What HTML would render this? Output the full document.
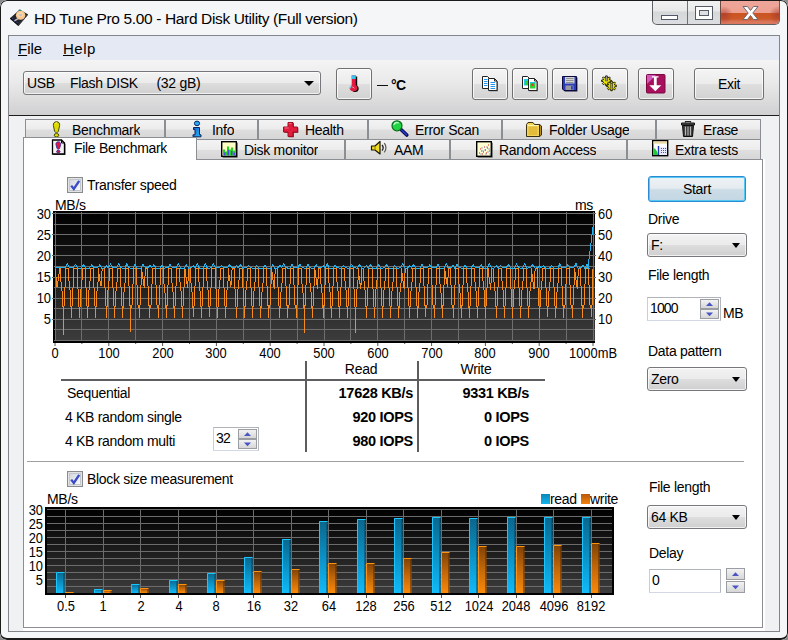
<!DOCTYPE html>
<html><head><meta charset="utf-8"><title>HD Tune Pro</title>
<style>
*{box-sizing:border-box;margin:0;padding:0}
html,body{width:788px;height:640px;overflow:hidden;background:#8a8a8a}
body{font-family:"Liberation Sans",sans-serif;font-size:14px;letter-spacing:-.3px;color:#000;position:relative}
.abs,.win div,.win span,.win svg{position:absolute}
.win{position:absolute;left:0;top:0;width:788px;height:640px;background:#f5f6f8;border-radius:7px;overflow:hidden}
.frame{left:0;top:0;width:788px;height:640px;border:1px solid #1b1b1b;border-right-width:1px;border-bottom-width:2px;border-radius:7px;pointer-events:none}
.win *{white-space:pre}
.title{left:34px;top:9px;font-size:15.500px;letter-spacing:-.36px;line-height:20px;color:#000}
.client{left:8px;top:35px;width:772px;height:597px;border:1px solid #83858a;background:#f0f1f3}
.menubar{left:9px;top:36px;width:770px;height:24px;background:#e5e9f3}
.menu{top:39px;font-size:15px;line-height:20px;letter-spacing:0}
.toolbar{left:9px;top:60px;width:770px;height:55px;background:linear-gradient(#f4f4f5 0,#e9e9ea 42%,#dbdbdc 75%,#d0d0d2 100%)}
.tbline{left:9px;top:115px;width:770px;height:1px;background:#1d1d1d}
.btn{border:1px solid #707070;border-radius:3px;background:linear-gradient(#f4f4f4 0,#ececec 48%,#dedede 52%,#d2d2d2 100%);box-shadow:inset 0 0 0 1px rgba(255,255,255,.75)}
.combo{border:1px solid #76787b;border-radius:3px;background:linear-gradient(#f3f3f3 0,#ebebeb 48%,#dddddd 52%,#cfcfcf 100%);box-shadow:inset 0 0 0 1px rgba(255,255,255,.7);line-height:22px;padding-left:5px}
.arr{width:0;height:0;border-left:5px solid transparent;border-right:5px solid transparent;border-top:5px solid #000}
.arr.sm{border-left-width:4.500px;border-right-width:4.500px;border-top-width:5px}
.tab{border:1px solid #8b8e93;border-bottom:none;background:linear-gradient(#f3f3f3 0,#ececec 48%,#dedede 52%,#d6d6d6 100%);height:19px;line-height:19px}
.tab span{top:1px}
.lbl{line-height:16px}
.tt{height:16px;overflow:hidden}
.xl{letter-spacing:0;top:345px;width:60px;text-align:center;line-height:16px;font-size:14px;transform:scaleX(.92);transform-origin:50% 50%}
.yl{letter-spacing:0;left:21px;width:30px;text-align:right;line-height:16px;font-size:14px;transform:scaleX(.92);transform-origin:100% 50%}
.yr{letter-spacing:0;left:598px;width:30px;text-align:left;line-height:16px;font-size:14px;transform:scaleX(.92);transform-origin:0 50%}
.yl2{letter-spacing:0;left:13px;width:30px;text-align:right;line-height:16px;font-size:14px;transform:scaleX(.92);transform-origin:100% 50%}
.xl2{letter-spacing:0;top:598px;width:60px;text-align:center;line-height:16px;font-size:14px;transform:scaleX(.92);transform-origin:50% 50%}
.b{font-weight:bold}
.bv{font-weight:bold;font-size:14.500px;letter-spacing:-.3px}
.chk{width:14px;height:14px;border:1px solid #8e8f8f;background:linear-gradient(135deg,#dcdfe4,#f7f8fa);box-shadow:inset 0 0 0 1px #f4f4f4,inset 0 0 0 2px #b6bac1}
.spinbox{border:1px solid;border-color:#b0b3ba #b3b6bc #d3d9e4 #c6cddb;background:#fff}
.spin{background:linear-gradient(#f2f2f2,#d6d6d6);border:1px solid #9a9da2}
</style></head><body>
<div class="win">
<!-- title bar -->
<svg style="left:8px;top:8px" width="22" height="20" viewBox="0 0 22 20"><path d="M1.800 10.400 11.700 1.500 20.200 6.600 10.400 18z" fill="#23232b"/><path d="M1.800 10.400 10.400 18 10.400 16.600 3 9.600z" fill="#101014"/><path d="M10.400 18 20.200 6.600 19 6.400 10.400 16.600z" fill="#3a3a46"/><ellipse cx="12.600" cy="7.300" rx="4.700" ry="4.500" fill="#f7c690"/><ellipse cx="12.300" cy="6.500" rx="3" ry="2.600" fill="#fbd7a6"/><rect x="11.400" y="6" width="2.400" height="2.200" fill="#b9bfd0"/><path d="M10.800 2.300h2.200" stroke="#2a8a78" stroke-width="1.300"/><path d="M6.300 12.800 10.200 10.600" stroke="#bdbdbd" stroke-width="1.500"/><path d="M4.200 10.600h1M8.500 14.600h1M5.500 13h1" stroke="#3a4cc0" stroke-width="1"/></svg>
<div class="title">HD Tune Pro 5.00 - Hard Disk Utility (Full version)</div>
<!-- caption buttons -->
<div style="left:652px;top:0;width:128px;height:25px;border:1px solid #5f6163;border-top:none;border-radius:0 0 5px 5px;overflow:hidden;background:linear-gradient(#f2f2f3 0,#e9e9ea 45%,#d6d7d9 50%,#dcdde0 100%)">
 <div style="left:34px;top:0;width:1px;height:25px;background:#6f7275"></div>
 <div style="left:67px;top:0;width:60px;height:25px;border-left:1px solid #6b4a42;background:radial-gradient(ellipse 9px 9px at 3px 15px,rgba(170,60,50,.75),rgba(170,60,50,0) 100%),radial-gradient(ellipse 9px 9px at 57px 15px,rgba(170,60,50,.75),rgba(170,60,50,0) 100%),linear-gradient(#efa79b 0,#eca092 50%,#cb5420 53%,#cc5a28 76%,#d9755c 86%,#dc7c62 100%)"></div>
 <svg style="left:-1px;top:1px" width="128" height="24" viewBox="0 0 128 24"><rect x="9.500" y="14.500" width="16" height="4" fill="#fff" stroke="#515869" /><rect x="43.500" y="5.500" width="17" height="13" fill="#fdfdfd" stroke="#555b68"/><rect x="47.500" y="9.500" width="9" height="5" fill="#dfe0e3" stroke="#555b68"/><path d="M91 5.500h4.500l3 4 3-4h4.500l-5.200 6.500 5.200 6.500h-4.500l-3-4-3 4h-4.500l5.200-6.500z" fill="#fff" stroke="#6a6a72" stroke-width="1" stroke-linejoin="round"/></svg>
</div>
<div class="client"></div>
<div class="menubar"></div>
<div class="menu" style="left:18px"><u>F</u>ile</div>
<div class="menu" style="left:63px;letter-spacing:.5px"><u>H</u>elp</div>
<div class="toolbar"></div>
<div class="tbline"></div>
<!-- toolbar controls -->
<div class="combo" style="left:23px;top:71px;width:298px;height:24px"></div><div class="lbl" style="left:27px;top:75px">USB</div><div class="lbl" style="left:70px;top:75px">Flash DISK</div><div class="lbl" style="left:156.500px;top:75px">(32 gB)</div>
<div class="arr" style="left:304px;top:81px"></div>
<div class="btn" style="left:336px;top:68px;width:36px;height:32px"></div>
<svg style="left:348px;top:74px" width="12" height="19" viewBox="0 0 12 19"><path d="M4.700 2.200H8.700V11.500C10 12.300 10.200 13.500 10.200 14.500C10.200 16.500 8.800 17.800 6.800 17.800C5 17.800 3.200 16.800 3.200 14.700C3.200 13.300 3.900 12.300 4.700 11.600z" fill="#0a0a0a" transform="translate(.5,.3)"/><path d="M3.700 1.300H7.700V11C9 11.800 9.300 13 9.300 14C9.300 16 8 17.300 5.800 17.300C3.600 17.300 1.600 16.200 1.600 14.200C1.600 12.800 2.700 11.800 3.700 11z" fill="#e21a40"/><rect x="3.700" y="1.300" width="4" height="3.700" fill="#38c4ec"/><path d="M1.600 14.200C1.600 12.800 2.500 11.900 3.500 11.200L3.700 12.500C3 13 2.800 13.600 2.800 14.600z" fill="#7ad8f0"/><path d="M4.500 13C5.200 13 5.800 13.800 6.200 14.300" stroke="#ffe0e0" stroke-width="1" fill="none"/></svg>
<div style="left:377px;top:85px;width:11px;height:1px;background:#111"></div>
<div class="lbl b" style="left:391px;top:77px;letter-spacing:-.6px">°C</div>
<div class="btn" style="left:472px;top:68px;width:36px;height:32px"></div>
<div class="btn" style="left:512px;top:68px;width:36px;height:32px"></div>
<div class="btn" style="left:552px;top:68px;width:36px;height:32px"></div>
<div class="btn" style="left:592px;top:68px;width:36px;height:32px"></div>
<div class="btn" style="left:638px;top:68px;width:36px;height:32px"></div>
<div class="btn" style="left:694px;top:68px;width:70px;height:32px;text-align:center;line-height:30px">Exit</div>
<svg style="left:481px;top:75px" width="18" height="17" viewBox="0 0 18 17"><path d="M1.500 1.500H6.500L8.500 3.500V13.500H1.500z" fill="#fff" stroke="#222" stroke-width="1"/><path d="M3 4.500H6.500M3 6.500H6.500M3 8.500H6.500M3 10.500H6.500" stroke="#2196f3" stroke-width="1"/><path d="M7.500 3.500H13.500L16 6V15.500H7.500z" fill="#555" transform="translate(.8,.8)"/><path d="M7.500 3.500H13.500L16 6V15.500H7.500z" fill="#fff" stroke="#222" stroke-width="1"/><path d="M13.500 3.500V6H16" fill="none" stroke="#222" stroke-width="1"/><path d="M9.500 7.500H14M9.500 9.500H14M9.500 11.500H14M9.500 13.500H14" stroke="#2196f3" stroke-width="1"/></svg><svg style="left:521px;top:75px" width="18" height="17" viewBox="0 0 18 17"><path d="M1.500 1.500H6.500L8.500 3.500V13.500H1.500z" fill="#fff" stroke="#222" stroke-width="1"/><rect x="3" y="4" width="4.500" height="6.500" fill="#20c8e8"/><rect x="4" y="6" width="3" height="4" fill="#30d030"/><path d="M7.500 3.500H13.500L16 6V15.500H7.500z" fill="#555" transform="translate(.8,.8)"/><path d="M7.500 3.500H13.500L16 6V15.500H7.500z" fill="#fff" stroke="#222" stroke-width="1"/><path d="M13.500 3.500V6H16" fill="none" stroke="#222" stroke-width="1"/><rect x="9" y="7" width="5.500" height="6.500" fill="#30d030"/><rect x="10.500" y="8.500" width="2" height="2.500" fill="#e03030"/><rect x="9" y="7" width="5.500" height="1.300" fill="#20c8e8"/></svg><svg style="left:561px;top:75px" width="18" height="17" viewBox="0 0 18 17"><path d="M1.500 1.500H15.500V15.500H3L1.500 14z" fill="#10103a" transform="translate(.9,.9)"/><path d="M1.500 1.500H15.500V15.500H3L1.500 14z" fill="#2a3cb8" stroke="#0a0a40" stroke-width="1"/><rect x="4" y="2" width="9.500" height="6.500" fill="#d4d4d4"/><path d="M5 3.500H12.500M5 5.500H12.500M5 7.500H12.500" stroke="#888" stroke-width=".9"/><rect x="4.500" y="10.500" width="8" height="4.500" fill="#9a9aa0"/><rect x="10" y="11.200" width="1.800" height="3.300" fill="#2a3cb8"/></svg><svg style="left:599px;top:74px" width="20" height="19" viewBox="0 0 20 19"><g stroke="#1e1e00" stroke-width="1" fill="#ece400" stroke-linejoin="round"><path d="M12.2 6.0L12.2 7.6L10.7 7.6L10.3 8.5L11.4 9.6L10.2 10.8L9.1 9.7L8.2 10.1L8.2 11.6L6.6 11.6L6.6 10.1L5.7 9.7L4.6 10.8L3.4 9.6L4.5 8.5L4.1 7.6L2.6 7.6L2.6 6.0L4.1 6.0L4.5 5.1L3.4 4.0L4.6 2.8L5.7 3.9L6.6 3.5L6.6 2.0L8.2 2.0L8.2 3.5L9.1 3.9L10.2 2.8L11.4 4.0L10.3 5.1L10.7 6.0z"/><path d="M17.3 11.1L17.3 12.7L15.8 12.7L15.4 13.6L16.5 14.7L15.3 15.9L14.2 14.8L13.3 15.2L13.3 16.7L11.7 16.7L11.7 15.2L10.8 14.8L9.7 15.9L8.5 14.7L9.6 13.6L9.2 12.7L7.7 12.7L7.7 11.1L9.2 11.1L9.6 10.2L8.5 9.1L9.7 7.9L10.8 9.0L11.7 8.6L11.7 7.1L13.3 7.1L13.3 8.6L14.2 9.0L15.3 7.9L16.5 9.1L15.4 10.2L15.8 11.1z"/></g><path d="M7.500 1.800V7.200" stroke="#303030" stroke-width="2.400"/><path d="M7.500 2.300V6.800" stroke="#9a9a9a" stroke-width="1.200"/><path d="M12.600 9V14.300" stroke="#303030" stroke-width="2.400"/><path d="M12.600 9.500V13.900" stroke="#9a9a9a" stroke-width="1.200"/></svg><svg style="left:646px;top:74px" width="20" height="20" viewBox="0 0 20 20"><rect x=".5" y=".5" width="18.500" height="18.500" rx="1" fill="#a8105c" stroke="#7a0840" stroke-width="1"/><path d="M1 1H10L1 10z" fill="#d868cc" opacity=".85"/><path d="M6 2.200H12.500V3.600H10.700V11.200H15.300L9.300 17.200 3.300 11.200H7.900V3.600H6z" fill="#fff"/></svg>
<!-- tabs -->
<div class="tab" style="left:25px;top:119px;width:140px;height:20px"></div>
<div class="lbl tt" style="left:72px;top:122px">Benchmark</div>
<svg style="left:52px;top:121px" width="9" height="17" viewBox="0 0 9 17"><path d="M4.500 .700C6.800 .700 7.900 2.400 7.600 4.600L6.300 10.600C6.100 11.600 2.900 11.600 2.700 10.600L1.400 4.600C1.100 2.400 2.200 .700 4.500 .700z" fill="#dcdc00" stroke="#4a4a00" stroke-width="1"/><ellipse cx="4.500" cy="14.200" rx="2.300" ry="1.700" fill="#dcdc00" stroke="#4a4a00" stroke-width="1"/><path d="M3.300 2.500C3.600 1.900 4.600 1.800 5 2.200" stroke="#ffffa0" stroke-width="1" fill="none"/></svg>
<div class="tab" style="left:165px;top:119px;width:93px;height:20px"></div>
<div class="lbl tt" style="left:212px;top:122px">Info</div>
<svg style="left:192px;top:120px" width="10" height="18" viewBox="0 0 10 18"><ellipse cx="5" cy="3.400" rx="2.600" ry="2.300" fill="#28a8f0" stroke="#0a2a6a" stroke-width="1"/><path d="M1.500 7.500H7.500V14.800H9V16.800H1V14.800H3V9.500H1.500z" fill="url(#ginfo)" stroke="#0a2060" stroke-width="1" stroke-linejoin="round"/></svg>
<div class="tab" style="left:258px;top:119px;width:110px;height:20px"></div>
<div class="lbl tt" style="left:305px;top:122px">Health</div>
<svg style="left:282px;top:121px" width="17" height="17" viewBox="0 0 17 17"><path d="M6 1.500H11V6H15.500V11H11V15.500H6V11H1.500V6H6z" fill="#7a0a1a" transform="translate(.8,.8)"/><path d="M6 1.500H11V6H15.500V11H11V15.500H6V11H1.500V6H6z" fill="#e21c3c" stroke="#a00c24" stroke-width="1" stroke-linejoin="round"/><path d="M6.800 2.600H9.500M2.600 7H6.800" stroke="#f87088" stroke-width="1"/></svg>
<div class="tab" style="left:368px;top:119px;width:134px;height:20px"></div>
<div class="lbl tt" style="left:415px;top:122px">Error Scan</div>
<svg style="left:390px;top:119px" width="20" height="19" viewBox="0 0 20 19"><path d="M11 10.500 16.800 16" stroke="#0a0a50" stroke-width="3.600" stroke-linecap="round"/><path d="M11.500 11 16.500 15.700" stroke="#2838c8" stroke-width="1.600" stroke-linecap="round"/><circle cx="7" cy="6.800" r="5" fill="#22d444" stroke="#0a6a1a" stroke-width="1.200"/><path d="M4 5.500C4.800 3.800 6.800 3.200 8.300 3.800" stroke="#b8ffc4" stroke-width="1.400" fill="none" stroke-linecap="round"/></svg>
<div class="tab" style="left:502px;top:119px;width:154px;height:20px"></div>
<div class="lbl tt" style="left:549px;top:122px">Folder Usage</div>
<svg style="left:525px;top:120px" width="18" height="18" viewBox="0 0 18 18"><path d="M1.500 4.500 3 2.500H8L9.500 4.500H14.500V16.500H1.500z" fill="#f0d458" stroke="#3a3010" stroke-width="1" stroke-linejoin="round"/><path d="M4.500 6.500H16.500V16.500H4.500z" fill="#e8c040" stroke="#3a3010" stroke-width="1" stroke-linejoin="round" opacity="0"/><path d="M14.500 4.500 16.500 6V15L14.500 16.500z" fill="#b89020" stroke="#3a3010" stroke-width="1" stroke-linejoin="round"/><path d="M3.500 6.500H12.500V15H3.500z" fill="#e4bc3c"/><path d="M2.500 5.500H13.500" stroke="#fff4b0" stroke-width="1"/></svg>
<div class="tab" style="left:656px;top:119px;width:105px;height:20px"></div>
<div class="lbl tt" style="left:703px;top:122px">Erase</div>
<svg style="left:680px;top:120px" width="16" height="18" viewBox="0 0 16 18"><path d="M5.500 2.500V1.500H10.500V2.500" fill="none" stroke="#222" stroke-width="1.200"/><path d="M1.500 3H14.500V5H1.500z" fill="#555" stroke="#111" stroke-width="1"/><path d="M2.500 5.500H13.500L12.500 16.500H3.500z" fill="#3a3a3a" stroke="#0c0c0c" stroke-width="1" stroke-linejoin="round"/><path d="M5.500 6.500V15.500M8 6.500V15.500M10.500 6.500V15.500" stroke="#b8b8b8" stroke-width="1.100"/></svg>
<div class="tab" style="left:196px;top:139px;width:149px;height:21px"></div>
<div class="lbl tt" style="left:244px;top:142px">Disk monitor</div>
<svg style="left:221px;top:141px" width="17" height="17" viewBox="0 0 17 17"><rect x="1.600" y="1.600" width="15" height="15" fill="#333"/><rect x=".7" y=".7" width="14.600" height="14.600" fill="#ffffc4" stroke="#000" stroke-width="1.400"/><path d="M2 14.600V8.500H4V10.500H6V5.500H8V8.500H10V6.500H12V9.500H14V14.600z" fill="#22d422"/><path d="M3 14.600V11.500H4.500V14.600zM6.500 14.600V9H8V14.600zM10 14.600V10H11.500V14.600zM12.500 14.600V11.500H14V14.600z" fill="#4a4adc"/></svg>
<div class="tab" style="left:345px;top:139px;width:105px;height:21px"></div>
<div class="lbl tt" style="left:394px;top:142px">AAM</div>
<svg style="left:370px;top:140px" width="19" height="16" viewBox="0 0 19 16"><path d="M1.500 6H5L10 1.500V14L5 10H1.500z" fill="#f0dc28" stroke="#1a1600" stroke-width="1.200" stroke-linejoin="round"/><path d="M5 6.300V9.700" stroke="#8a7a00" stroke-width="1"/><path d="M12 5C13.300 6.500 13.300 9 12 10.500" stroke="#222" stroke-width="1.300" fill="none"/><path d="M14.300 3.200C16.500 5.800 16.500 9.800 14.300 12.300" stroke="#555" stroke-width="1.200" fill="none"/></svg>
<div class="tab" style="left:450px;top:139px;width:177px;height:21px"></div>
<div class="lbl tt" style="left:499px;top:142px">Random Access</div>
<svg style="left:476px;top:141px" width="17" height="17" viewBox="0 0 17 17"><rect x="1.600" y="1.600" width="15" height="15" fill="#444"/><rect x=".7" y=".7" width="14.600" height="14.600" fill="#ffffd0" stroke="#000" stroke-width="1.400"/><path d="M3 12h1M5 10h1M4 8h1M7 11h1M9 9h1M8 6h1M11 7h1M12 4h1M10 12h1M13 10h1M6 13h1" stroke="#e02030" stroke-width="1.200"/><path d="M4 12h1M6 9h1M8 8h1M10 5h1M12 7h1M11 10h1M13 12h1M5 6h1M9 12h1" stroke="#3040d8" stroke-width="1.200" transform="translate(.5,1)"/></svg>
<div class="tab" style="left:627px;top:139px;width:134px;height:21px"></div>
<div class="lbl tt" style="left:675px;top:142px">Extra tests</div>
<svg style="left:652px;top:140px" width="17" height="17" viewBox="0 0 17 17"><rect x=".7" y=".7" width="15" height="15" fill="#fff" stroke="#000" stroke-width="1.400"/><rect x="1.400" y="1.400" width="13.600" height="2.200" fill="#e8d8a0"/><path d="M1.400 15V8C3 8.500 5 10 6 15z" fill="#22c83c"/><path d="M6.500 6V15" stroke="#2030c0" stroke-width="1.400"/><rect x="8" y="7" width="7" height="8" fill="#e8e8ff"/><path d="M9 8.500h1M11 8.500h1M13 8.500h1M9 10.500h1M11 10.500h1M13 10.500h1M9 12.500h1M11 12.500h1M13 12.500h1" stroke="#d82040" stroke-width="1.200"/></svg>
<div style="left:23px;top:159px;width:742px;height:472px;background:#fff"></div><div style="left:23px;top:159px;width:740px;height:469px;border:1px solid #8b8e93;background:#fff"></div>
<div style="left:23px;top:137px;width:174px;height:23px;border:1px solid #8b8e93;border-bottom:none;background:#fff"></div><div style="left:24px;top:159px;width:172px;height:2px;background:#fff"></div>
<div class="lbl tt" style="left:74px;top:140px">File Benchmark</div>
<svg style="left:51px;top:139px" width="16" height="17" viewBox="0 0 16 17"><path d="M1.500 1H10.500L13.500 4V15H1.500z" fill="#555" transform="translate(1,1)"/><path d="M1.500 1H10.500L13.500 4V15H1.500z" fill="#f2f2f2" stroke="#000" stroke-width="1.300" stroke-linejoin="miter"/><path d="M10.500 1V4H13.500" fill="none" stroke="#000" stroke-width="1"/><path d="M7.300 2.800C9.200 2.800 9.900 4.200 9.600 5.700L8.500 9.600C8.300 10.300 6.300 10.300 6.100 9.600L5 5.700C4.700 4.200 5.400 2.800 7.300 2.800z" fill="#e4143c" stroke="#3030a8" stroke-width=".9"/><ellipse cx="7.300" cy="12.600" rx="1.700" ry="1.300" fill="#e4143c" stroke="#3030a8" stroke-width=".9"/></svg>
<!-- panel -->
<svg style="left:0;top:0" width="0" height="0"><defs><linearGradient id="ginfo" x1="0" y1="0" x2="1" y2="1"><stop offset="0" stop-color="#1060d8"/><stop offset="1" stop-color="#28c0f4"/></linearGradient><linearGradient id="gchk" x1="0" y1="0" x2="1" y2="1"><stop offset="0" stop-color="#d2d6dc"/><stop offset="1" stop-color="#fbfbfc"/></linearGradient><linearGradient id="gbg" x1="0" y1="0" x2="0" y2="1"><stop offset="0" stop-color="#000"/><stop offset=".5" stop-color="#1c1c1c"/><stop offset="1" stop-color="#3d3d3d"/></linearGradient><linearGradient id="gb" x1="0" y1="0" x2="0" y2="1"><stop offset="0" stop-color="#0a668c"/><stop offset=".5" stop-color="#0c90c4"/><stop offset="1" stop-color="#12baf8"/></linearGradient><linearGradient id="go" x1="0" y1="0" x2="0" y2="1"><stop offset="0" stop-color="#7e4206"/><stop offset=".5" stop-color="#c2680a"/><stop offset="1" stop-color="#fa8a0a"/></linearGradient></defs></svg>
<svg style="left:67px;top:177px" width="16" height="16" viewBox="0 0 16 16"><rect x=".6" y=".6" width="14.800" height="14.800" fill="#fbfbfb" stroke="#8a8b8c" stroke-width="1.200"/><rect x="2.500" y="2.500" width="11" height="11" fill="url(#gchk)" stroke="#c2c6cd" stroke-width="1"/><path d="M4.200 8.600 6.800 12 12.200 3.800" fill="none" stroke="#3c4bc8" stroke-width="2.300" stroke-linecap="butt" stroke-linejoin="miter"/></svg>
<div class="lbl " style="left:87px;top:177px;">Transfer speed</div>
<div class="lbl " style="left:55px;top:197px;">MB/s</div>
<div class="lbl " style="left:575px;top:197px;">ms</div>
<svg style="left:0;top:0" width="788" height="640" viewBox="0 0 788 640"><rect x="53" y="211" width="542" height="132" fill="#000"/><rect x="55" y="213" width="540" height="128" fill="url(#gbg)"/><path d="M52 213.5h3M52 234.5h3M52 255.5h3M52 277.5h3M52 298.5h3M52 319.5h3" stroke="#666" stroke-width="1"/><path d="M594 213.5h2M594 234.5h2M594 255.5h2M594 277.5h2M594 298.5h2M594 319.5h2" stroke="#666" stroke-width="1"/><path d="M55.5 212V342M81.5 212V342M108.5 212V342M135.5 212V342M162.5 212V342M189.5 212V342M216.5 212V342M243.5 212V342M270.5 212V342M297.5 212V342M324.5 212V342M350.5 212V342M377.5 212V342M404.5 212V342M431.5 212V342M458.5 212V342M485.5 212V342M512.5 212V342M539.5 212V342M566.5 212V342M593.5 212V342M54 213.5H595M54 224.5H595M54 234.5H595M54 245.5H595M54 255.5H595M54 266.5H595M54 277.5H595M54 287.5H595M54 298.5H595M54 308.5H595M54 319.5H595M54 329.5H595M54 340.5H595" stroke="#6e6e6e" stroke-width="1" fill="none"/>
<path d="M55.0 268.7L55.8 275.0L57.0 287.0L58.4 279.0L59.6 268.7L60.8 268.7L60.8 280.0L62.2 293.0L62.2 305.0L63.3 308.0L63.3 334.6L63.3 308.0L64.4 305.0L64.4 293.0L65.8 280.0L65.8 268.7L68.9 268.7L68.9 280.0L70.3 293.0L70.3 305.0L71.4 308.0L71.4 318.2L71.4 308.0L72.5 305.0L72.5 293.0L73.9 280.0L73.9 268.7L77.0 268.7L77.0 280.0L78.4 293.0L78.4 305.0L79.5 308.0L79.5 317.7L79.5 308.0L80.6 305.0L80.6 293.0L82.0 280.0L82.0 268.7L85.1 268.7L85.1 280.0L86.5 293.0L86.5 305.0L87.6 308.0L87.6 318.3L87.6 308.0L88.7 305.0L88.7 293.0L90.1 280.0L90.1 268.7L93.2 268.7L93.2 280.0L94.6 293.0L94.6 305.0L95.7 308.0L95.7 317.8L95.7 308.0L96.8 305.0L96.8 293.0L98.2 280.0L98.2 268.7L98.4 268.7L99.2 276.0L101.0 286.2L101.7 276.0L102.2 268.7L104.1 268.7L104.1 280.0L105.5 293.0L105.5 305.0L106.6 308.0L106.6 318.0L106.6 308.0L107.7 305.0L107.7 293.0L109.1 280.0L109.1 268.7L112.2 268.7L112.2 280.0L113.6 293.0L113.6 305.0L114.7 308.0L114.7 317.8L114.7 308.0L115.8 305.0L115.8 293.0L117.2 280.0L117.2 268.7L120.3 268.7L120.3 280.0L121.7 293.0L121.7 305.0L122.8 308.0L122.8 318.3L122.8 308.0L123.9 305.0L123.9 293.0L125.3 280.0L125.3 268.7L128.4 268.7L128.4 280.0L129.8 293.0L129.8 305.0L130.9 308.0L130.9 332.0L130.9 308.0L132.0 305.0L132.0 293.0L133.4 280.0L133.4 268.7L136.5 268.7L136.5 280.0L137.9 293.0L137.9 305.0L139.0 308.0L139.0 318.3L139.0 308.0L140.1 305.0L140.1 293.0L141.5 280.0L141.5 268.7L141.7 268.7L142.5 276.0L144.3 287.7L145.0 276.0L145.5 268.7L147.4 268.7L147.4 280.0L148.8 293.0L148.8 305.0L149.9 308.0L149.9 318.3L149.9 308.0L151.0 305.0L151.0 293.0L152.4 280.0L152.4 268.7L155.5 268.7L155.5 280.0L156.9 293.0L156.9 305.0L158.0 308.0L158.0 317.5L158.0 308.0L159.1 305.0L159.1 293.0L160.5 280.0L160.5 268.7L163.6 268.7L163.6 280.0L165.0 293.0L165.0 305.0L166.1 308.0L166.1 318.2L166.1 308.0L167.2 305.0L167.2 293.0L168.6 280.0L168.6 268.7L171.7 268.7L171.7 280.0L173.1 293.0L173.1 305.0L174.2 308.0L174.2 318.1L174.2 308.0L175.3 305.0L175.3 293.0L176.7 280.0L176.7 268.7L179.8 268.7L179.8 280.0L181.2 293.0L181.2 305.0L182.3 308.0L182.3 317.7L182.3 308.0L183.4 305.0L183.4 293.0L184.8 280.0L184.8 268.7L185.0 268.7L185.8 276.0L187.6 288.3L188.3 276.0L188.8 268.7L190.7 268.7L190.7 280.0L192.1 293.0L192.1 305.0L193.2 308.0L193.2 317.4L193.2 308.0L194.3 305.0L194.3 293.0L195.7 280.0L195.7 268.7L198.8 268.7L198.8 280.0L200.2 293.0L200.2 305.0L201.3 308.0L201.3 318.0L201.3 308.0L202.4 305.0L202.4 293.0L203.8 280.0L203.8 268.7L206.9 268.7L206.9 280.0L208.3 293.0L208.3 305.0L209.4 308.0L209.4 317.4L209.4 308.0L210.5 305.0L210.5 293.0L211.9 280.0L211.9 268.7L215.0 268.7L215.0 280.0L216.4 293.0L216.4 305.0L217.5 308.0L217.5 318.3L217.5 308.0L218.6 305.0L218.6 293.0L220.0 280.0L220.0 268.7L223.1 268.7L223.1 280.0L224.5 293.0L224.5 305.0L225.6 308.0L225.6 317.5L225.6 308.0L226.7 305.0L226.7 293.0L228.1 280.0L228.1 268.7L228.3 268.7L229.1 276.0L230.9 286.6L231.6 276.0L232.1 268.7L234.0 268.7L234.0 280.0L235.4 293.0L235.4 305.0L236.5 308.0L236.5 318.1L236.5 308.0L237.6 305.0L237.6 293.0L239.0 280.0L239.0 268.7L242.1 268.7L242.1 280.0L243.5 293.0L243.5 305.0L244.6 308.0L244.6 318.2L244.6 308.0L245.7 305.0L245.7 293.0L247.1 280.0L247.1 268.7L250.2 268.7L250.2 280.0L251.6 293.0L251.6 305.0L252.7 308.0L252.7 318.0L252.7 308.0L253.8 305.0L253.8 293.0L255.2 280.0L255.2 268.7L258.3 268.7L258.3 280.0L259.7 293.0L259.7 305.0L260.8 308.0L260.8 317.5L260.8 308.0L261.9 305.0L261.9 293.0L263.3 280.0L263.3 268.7L266.4 268.7L266.4 280.0L267.8 293.0L267.8 305.0L268.9 308.0L268.9 318.2L268.9 308.0L270.0 305.0L270.0 293.0L271.4 280.0L271.4 268.7L271.6 268.7L272.4 276.0L274.2 288.6L274.9 276.0L275.4 268.7L277.3 268.7L277.3 280.0L278.7 293.0L278.7 305.0L279.8 308.0L279.8 317.8L279.8 308.0L280.9 305.0L280.9 293.0L282.3 280.0L282.3 268.7L285.4 268.7L285.4 280.0L286.8 293.0L286.8 305.0L287.9 308.0L287.9 318.0L287.9 308.0L289.0 305.0L289.0 293.0L290.4 280.0L290.4 268.7L293.5 268.7L293.5 280.0L294.9 293.0L294.9 305.0L296.0 308.0L296.0 317.8L296.0 308.0L297.1 305.0L297.1 293.0L298.5 280.0L298.5 268.7L301.6 268.7L301.6 280.0L303.0 293.0L303.0 305.0L304.1 308.0L304.1 332.5L304.1 308.0L305.2 305.0L305.2 293.0L306.6 280.0L306.6 268.7L309.7 268.7L309.7 280.0L311.1 293.0L311.1 305.0L312.2 308.0L312.2 318.3L312.2 308.0L313.3 305.0L313.3 293.0L314.7 280.0L314.7 268.7L314.9 268.7L315.7 276.0L317.5 288.7L318.2 276.0L318.7 268.7L320.6 268.7L320.6 280.0L322.0 293.0L322.0 305.0L323.1 308.0L323.1 318.2L323.1 308.0L324.2 305.0L324.2 293.0L325.6 280.0L325.6 268.7L328.7 268.7L328.7 280.0L330.1 293.0L330.1 305.0L331.2 308.0L331.2 317.9L331.2 308.0L332.3 305.0L332.3 293.0L333.7 280.0L333.7 268.7L336.8 268.7L336.8 280.0L338.2 293.0L338.2 305.0L339.3 308.0L339.3 318.0L339.3 308.0L340.4 305.0L340.4 293.0L341.8 280.0L341.8 268.7L344.9 268.7L344.9 280.0L346.3 293.0L346.3 305.0L347.4 308.0L347.4 317.8L347.4 308.0L348.5 305.0L348.5 293.0L349.9 280.0L349.9 268.7L353.0 268.7L353.0 280.0L354.4 293.0L354.4 305.0L355.5 308.0L355.5 332.5L355.5 308.0L356.6 305.0L356.6 293.0L358.0 280.0L358.0 268.7L358.2 268.7L359.0 276.0L360.8 289.2L361.5 276.0L362.0 268.7L363.9 268.7L363.9 280.0L365.3 293.0L365.3 305.0L366.4 308.0L366.4 318.1L366.4 308.0L367.5 305.0L367.5 293.0L368.9 280.0L368.9 268.7L372.0 268.7L372.0 280.0L373.4 293.0L373.4 305.0L374.5 308.0L374.5 317.6L374.5 308.0L375.6 305.0L375.6 293.0L377.0 280.0L377.0 268.7L380.1 268.7L380.1 280.0L381.5 293.0L381.5 305.0L382.6 308.0L382.6 318.1L382.6 308.0L383.7 305.0L383.7 293.0L385.1 280.0L385.1 268.7L388.2 268.7L388.2 280.0L389.6 293.0L389.6 305.0L390.7 308.0L390.7 317.8L390.7 308.0L391.8 305.0L391.8 293.0L393.2 280.0L393.2 268.7L396.3 268.7L396.3 280.0L397.7 293.0L397.7 305.0L398.8 308.0L398.8 317.8L398.8 308.0L399.9 305.0L399.9 293.0L401.3 280.0L401.3 268.7L401.5 268.7L402.3 276.0L404.1 288.9L404.8 276.0L405.3 268.7L407.2 268.7L407.2 280.0L408.6 293.0L408.6 305.0L409.7 308.0L409.7 317.5L409.7 308.0L410.8 305.0L410.8 293.0L412.2 280.0L412.2 268.7L415.3 268.7L415.3 280.0L416.7 293.0L416.7 305.0L417.8 308.0L417.8 318.1L417.8 308.0L418.9 305.0L418.9 293.0L420.3 280.0L420.3 268.7L423.4 268.7L423.4 280.0L424.8 293.0L424.8 305.0L425.9 308.0L425.9 317.4L425.9 308.0L427.0 305.0L427.0 293.0L428.4 280.0L428.4 268.7L431.5 268.7L431.5 280.0L432.9 293.0L432.9 305.0L434.0 308.0L434.0 318.2L434.0 308.0L435.1 305.0L435.1 293.0L436.5 280.0L436.5 268.7L439.6 268.7L439.6 280.0L441.0 293.0L441.0 305.0L442.1 308.0L442.1 317.9L442.1 308.0L443.2 305.0L443.2 293.0L444.6 280.0L444.6 268.7L444.8 268.7L445.6 276.0L447.4 286.6L448.1 276.0L448.6 268.7L450.5 268.7L450.5 280.0L451.9 293.0L451.9 305.0L453.0 308.0L453.0 317.6L453.0 308.0L454.1 305.0L454.1 293.0L455.5 280.0L455.5 268.7L458.6 268.7L458.6 280.0L460.0 293.0L460.0 305.0L461.1 308.0L461.1 317.9L461.1 308.0L462.2 305.0L462.2 293.0L463.6 280.0L463.6 268.7L466.7 268.7L466.7 280.0L468.1 293.0L468.1 305.0L469.2 308.0L469.2 318.3L469.2 308.0L470.3 305.0L470.3 293.0L471.7 280.0L471.7 268.7L474.8 268.7L474.8 280.0L476.2 293.0L476.2 305.0L477.3 308.0L477.3 317.7L477.3 308.0L478.4 305.0L478.4 293.0L479.8 280.0L479.8 268.7L482.9 268.7L482.9 280.0L484.3 293.0L484.3 305.0L485.4 308.0L485.4 317.6L485.4 308.0L486.5 305.0L486.5 293.0L487.9 280.0L487.9 268.7L488.1 268.7L488.9 276.0L490.7 289.5L491.4 276.0L491.9 268.7L493.8 268.7L493.8 280.0L495.2 293.0L495.2 305.0L496.3 308.0L496.3 317.8L496.3 308.0L497.4 305.0L497.4 293.0L498.8 280.0L498.8 268.7L501.9 268.7L501.9 280.0L503.3 293.0L503.3 305.0L504.4 308.0L504.4 318.0L504.4 308.0L505.5 305.0L505.5 293.0L506.9 280.0L506.9 268.7L510.0 268.7L510.0 280.0L511.4 293.0L511.4 305.0L512.5 308.0L512.5 317.7L512.5 308.0L513.6 305.0L513.6 293.0L515.0 280.0L515.0 268.7L518.1 268.7L518.1 280.0L519.5 293.0L519.5 305.0L520.6 308.0L520.6 317.8L520.6 308.0L521.7 305.0L521.7 293.0L523.1 280.0L523.1 268.7L526.2 268.7L526.2 280.0L527.6 293.0L527.6 305.0L528.7 308.0L528.7 317.8L528.7 308.0L529.8 305.0L529.8 293.0L531.2 280.0L531.2 268.7L531.4 268.7L532.2 276.0L534.0 289.4L534.7 276.0L535.2 268.7L537.1 268.7L537.1 280.0L538.5 293.0L538.5 305.0L539.6 308.0L539.6 317.9L539.6 308.0L540.7 305.0L540.7 293.0L542.1 280.0L542.1 268.7L545.2 268.7L545.2 280.0L546.6 293.0L546.6 305.0L547.7 308.0L547.7 317.4L547.7 308.0L548.8 305.0L548.8 293.0L550.2 280.0L550.2 268.7L553.3 268.7L553.3 280.0L554.7 293.0L554.7 305.0L555.8 308.0L555.8 317.9L555.8 308.0L556.9 305.0L556.9 293.0L558.3 280.0L558.3 268.7L561.4 268.7L561.4 280.0L562.8 293.0L562.8 305.0L563.9 308.0L563.9 317.7L563.9 308.0L565.0 305.0L565.0 293.0L566.4 280.0L566.4 268.7L569.5 268.7L569.5 280.0L570.9 293.0L570.9 305.0L572.0 308.0L572.0 318.3L572.0 308.0L573.1 305.0L573.1 293.0L574.5 280.0L574.5 268.7L574.7 268.7L575.5 276.0L577.3 288.6L578.0 276.0L578.5 268.7L580.4 268.7L580.4 280.0L581.8 293.0L581.8 305.0L582.9 308.0L582.9 317.6L582.9 308.0L584.0 305.0L584.0 293.0L585.4 280.0L585.4 268.7L588.5 268.7L588.5 280.0L589.9 293.0L589.9 305.0L591.0 308.0L591.0 317.4L591.0 308.0L592.1 305.0L592.1 293.0L592.5 280.0L592.5 268.7" stroke="#f78b1e" stroke-width="1" fill="none" stroke-linejoin="miter" shape-rendering="crispEdges"/>
<path d="M55.0 267.3L65.1 267.8L67.3 263.9L69.5 267.9L73.2 267.5L75.4 264.3L77.6 268.0L81.3 268.2L83.5 264.7L85.7 268.0L89.4 268.3L91.6 264.7L93.8 267.6L97.5 267.9L99.7 264.7L101.9 268.5L104.7 267.9L106.7 265.5L108.3 267.8L108.4 267.6L110.6 263.9L112.8 268.0L116.5 267.8L118.7 263.5L120.9 267.7L124.6 268.5L126.8 263.9L129.0 267.8L132.7 268.6L134.9 263.9L137.1 268.3L140.8 268.6L143.0 263.9L145.2 267.7L148.0 267.9L150.0 265.5L151.6 267.8L151.7 267.7L153.9 264.7L156.1 268.2L159.8 268.0L162.0 265.3L164.2 268.1L167.9 267.8L170.1 264.3L172.3 267.7L176.0 267.9L178.2 263.5L180.4 268.1L184.1 268.3L186.3 264.7L188.5 268.1L191.3 267.9L193.3 265.5L194.9 267.8L195.0 268.2L197.2 263.5L199.4 268.3L203.1 268.5L205.3 263.9L207.5 268.4L211.2 267.9L213.4 263.5L215.6 267.9L219.3 268.0L221.5 265.3L223.7 267.9L227.4 267.6L229.6 264.7L231.8 267.7L234.6 267.9L236.6 265.5L238.2 267.8L238.3 267.6L240.5 264.7L242.7 268.2L246.4 267.5L248.6 265.3L250.8 267.7L254.5 268.5L256.7 265.3L258.9 268.2L262.6 268.5L264.8 265.3L267.0 268.2L270.7 268.2L272.9 264.7L275.1 268.6L277.9 267.9L279.9 265.5L281.5 267.8L281.6 267.9L283.8 263.5L286.0 267.6L289.7 268.6L291.9 263.9L294.1 268.0L297.8 267.8L300.0 263.9L302.2 267.7L305.9 268.3L308.1 264.3L310.3 268.0L314.0 268.1L316.2 264.7L318.4 267.7L321.2 267.9L323.2 265.5L324.8 267.8L324.9 267.9L327.1 263.5L329.3 268.3L333.0 268.3L335.2 265.3L337.4 267.8L341.1 268.3L343.3 265.3L345.5 267.8L349.2 268.5L351.4 264.3L353.6 267.9L357.3 268.1L359.5 264.7L361.7 268.4L364.5 267.9L366.5 265.5L368.1 267.8L368.2 268.2L370.4 264.3L372.6 268.2L376.3 268.4L378.5 264.7L380.7 268.4L384.4 267.7L386.6 264.7L388.8 268.0L392.5 268.6L394.7 265.3L396.9 268.4L400.6 267.8L402.8 263.9L405.0 268.3L407.8 267.9L409.8 265.5L411.4 267.8L411.5 268.0L413.7 264.3L415.9 268.5L419.6 268.6L421.8 264.3L424.0 267.9L427.7 267.6L429.9 264.7L432.1 268.0L435.8 267.7L438.0 264.3L440.2 268.2L443.9 268.4L446.1 263.5L448.3 268.0L451.1 267.9L453.1 265.5L454.7 267.8L454.8 268.4L457.0 264.3L459.2 267.6L462.9 268.5L465.1 265.3L467.3 268.4L471.0 268.0L473.2 264.7L475.4 267.7L479.1 267.6L481.3 264.3L483.5 268.5L487.2 268.0L489.4 263.9L491.6 268.3L494.4 267.9L496.4 265.5L498.0 267.8L498.1 268.3L500.3 265.3L502.5 267.7L506.2 267.5L508.4 264.7L510.6 268.1L514.3 268.4L516.5 263.9L518.7 267.7L522.4 268.6L524.6 263.5L526.8 268.2L530.5 267.7L532.7 264.3L534.9 268.1L537.7 267.9L539.7 265.5L541.3 267.8L541.4 267.5L543.6 265.3L545.8 268.6L549.5 268.1L551.7 265.3L553.9 268.5L557.6 268.6L559.8 263.9L562.0 267.7L565.7 267.5L567.9 264.7L570.1 267.7L573.8 267.8L576.0 263.5L578.2 268.1L581.0 267.9L583.0 265.5L584.6 267.8L584.7 268.1L586.9 264.3L589.1 268.4L586.5 267.3L588.0 265.8L590.0 251.6L593.3 224.9" stroke="#22b3ef" stroke-width="1" fill="none" stroke-linejoin="round" shape-rendering="crispEdges"/><path d="M55.0 342v4M81.9 342v2M108.8 342v4M135.7 342v2M162.6 342v4M189.5 342v2M216.4 342v4M243.3 342v2M270.2 342v4M297.1 342v2M324.0 342v4M350.9 342v2M377.8 342v4M404.7 342v2M431.6 342v4M458.5 342v2M485.4 342v4M512.3 342v2M539.2 342v4M566.1 342v2M593.0 342v4" stroke="#555" stroke-width="1" fill="none"/><rect x="53" y="341" width="542" height="2" fill="#000"/></svg>
<div class="yl" style="top:205.5px">30</div>
<div class="yl" style="top:226.7px">25</div>
<div class="yl" style="top:247.8px">20</div>
<div class="yl" style="top:269.0px">15</div>
<div class="yl" style="top:290.2px">10</div>
<div class="yl" style="top:311.3px">5</div><div class="yr" style="top:205.5px">60</div>
<div class="yr" style="top:226.7px">50</div>
<div class="yr" style="top:247.8px">40</div>
<div class="yr" style="top:269.0px">30</div>
<div class="yr" style="top:290.2px">20</div>
<div class="yr" style="top:311.3px">10</div><div class="xl" style="left:25.0px">0</div>
<div class="xl" style="left:78.8px">100</div>
<div class="xl" style="left:132.6px">200</div>
<div class="xl" style="left:186.4px">300</div>
<div class="xl" style="left:240.2px">400</div>
<div class="xl" style="left:294.0px">500</div>
<div class="xl" style="left:347.8px">600</div>
<div class="xl" style="left:401.6px">700</div>
<div class="xl" style="left:455.4px">800</div>
<div class="xl" style="left:509.2px">900</div>
<div class="xl" style="left:569px;width:60px;text-align:left;transform-origin:0 50%">1000mB</div>
<div style="left:61px;top:379px;width:484px;height:2px;background:#5e5e60"></div>
<div style="left:305px;top:361px;width:2px;height:91px;background:#5c5c5e"></div>
<div style="left:417px;top:361px;width:2px;height:91px;background:#5c5c5c"></div>
<div class="lbl " style="left:286px;width:150px;text-align:center;top:361px;">Read</div>
<div class="lbl " style="left:401px;width:150px;text-align:center;top:361px;">Write</div>
<div class="lbl " style="left:67px;top:385px;">Sequential</div>
<div class="lbl " style="left:65px;top:409px;">4 KB random single</div>
<div class="lbl " style="left:65px;top:433px;">4 KB random multi</div>
<div class="lbl bv" style="left:263px;width:150px;text-align:right;top:385px;">17628 KB/s</div>
<div class="lbl bv" style="left:263px;width:150px;text-align:right;top:409px;">920 IOPS</div>
<div class="lbl bv" style="left:263px;width:150px;text-align:right;top:433px;">980 IOPS</div>
<div class="lbl bv" style="left:379px;width:150px;text-align:right;top:385px;">9331 KB/s</div>
<div class="lbl bv" style="left:379px;width:150px;text-align:right;top:409px;">0 IOPS</div>
<div class="lbl bv" style="left:379px;width:150px;text-align:right;top:433px;">0 IOPS</div>
<div class="spinbox" style="left:213px;top:427px;width:46px;height:24px"></div>
<div class="lbl " style="left:216px;top:430px;letter-spacing:-.8px">32</div>
<div class="spin" style="left:238px;top:429px;width:19px;height:10px"></div><div class="spin" style="left:238px;top:439px;width:19px;height:10px"></div><svg style="left:238px;top:429px" width="19" height="20" viewBox="0 0 19 20"><path d="M6.0 7.0l3.500-3.800 3.500 3.800z" fill="#4a55c4"/><path d="M6.0 13.5l3.500 3.800 3.500-3.800z" fill="#4a55c4"/></svg>
<div style="left:27px;top:461px;width:717px;height:1px;background:#a0a0a0"></div>
<svg style="left:67px;top:471px" width="16" height="16" viewBox="0 0 16 16"><rect x=".6" y=".6" width="14.800" height="14.800" fill="#fbfbfb" stroke="#8a8b8c" stroke-width="1.200"/><rect x="2.500" y="2.500" width="11" height="11" fill="url(#gchk)" stroke="#c2c6cd" stroke-width="1"/><path d="M4.200 8.600 6.800 12 12.200 3.800" fill="none" stroke="#3c4bc8" stroke-width="2.300" stroke-linecap="butt" stroke-linejoin="miter"/></svg>
<div class="lbl " style="left:87px;top:471px;">Block size measurement</div>
<div class="lbl " style="left:47px;top:491px;">MB/s</div>
<div style="left:541px;top:494px;width:9px;height:10px;background:linear-gradient(#0b86b8,#12b4ee)"></div>
<div class="lbl " style="left:550px;top:491px;">read</div>
<div style="left:581px;top:494px;width:9px;height:10px;background:linear-gradient(#b9580c,#f2820e)"></div>
<div class="lbl " style="left:590px;top:491px;">write</div>
<svg style="left:0;top:0" width="788" height="640" viewBox="0 0 788 640"><rect x="45" y="507" width="569" height="88" fill="#000"/><rect x="47" y="509" width="565" height="84" fill="url(#gbg)"/><path d="M65.5 509V598M103.5 509V598M140.5 509V598M178.5 509V598M216.5 509V598M253.5 509V598M291.5 509V598M328.5 509V598M366.5 509V598M403.5 509V598M441.5 509V598M478.5 509V598M516.5 509V598M553.5 509V598M591.5 509V598M47 509.5H614M47 516.5H612M47 523.5H614M47 530.5H612M47 537.5H614M47 544.5H612M47 551.5H614M47 558.5H612M47 565.5H614M47 572.5H612M47 579.5H614M47 586.5H612M47 593.5H614" stroke="#6c6c6c" stroke-width="1" fill="none"/>
<rect x="56" y="572" width="8.500" height="21" fill="url(#gb)"/>
<rect x="63" y="573" width="1.500" height="20" fill="#064a66" opacity=".55"/>
<path d="M56.5 593V572.5H64.5" stroke="#19c6ff" stroke-width="1" fill="none"/>
<rect x="65.0" y="592" width="8.500" height="1" fill="url(#go)"/>
<rect x="72.0" y="593" width="1.500" height="0" fill="#5a2c02" opacity=".55"/>
<path d="M65.5 593V592.5H73.5" stroke="#ff930f" stroke-width="1" fill="none"/>
<rect x="94" y="589" width="8.500" height="4" fill="url(#gb)"/>
<rect x="101" y="590" width="1.500" height="3" fill="#064a66" opacity=".55"/>
<path d="M94.5 593V589.5H102.5" stroke="#19c6ff" stroke-width="1" fill="none"/>
<rect x="103.0" y="590" width="8.500" height="3" fill="url(#go)"/>
<rect x="110.0" y="591" width="1.500" height="2" fill="#5a2c02" opacity=".55"/>
<path d="M103.5 593V590.5H111.5" stroke="#ff930f" stroke-width="1" fill="none"/>
<rect x="131" y="584" width="8.500" height="9" fill="url(#gb)"/>
<rect x="138" y="585" width="1.500" height="8" fill="#064a66" opacity=".55"/>
<path d="M131.5 593V584.5H139.5" stroke="#19c6ff" stroke-width="1" fill="none"/>
<rect x="140.0" y="588" width="8.500" height="5" fill="url(#go)"/>
<rect x="147.0" y="589" width="1.500" height="4" fill="#5a2c02" opacity=".55"/>
<path d="M140.5 593V588.5H148.5" stroke="#ff930f" stroke-width="1" fill="none"/>
<rect x="169" y="580" width="8.500" height="13" fill="url(#gb)"/>
<rect x="176" y="581" width="1.500" height="12" fill="#064a66" opacity=".55"/>
<path d="M169.5 593V580.5H177.5" stroke="#19c6ff" stroke-width="1" fill="none"/>
<rect x="178.0" y="584" width="8.500" height="9" fill="url(#go)"/>
<rect x="185.0" y="585" width="1.500" height="8" fill="#5a2c02" opacity=".55"/>
<path d="M178.5 593V584.5H186.5" stroke="#ff930f" stroke-width="1" fill="none"/>
<rect x="207" y="573" width="8.500" height="20" fill="url(#gb)"/>
<rect x="214" y="574" width="1.500" height="19" fill="#064a66" opacity=".55"/>
<path d="M207.5 593V573.5H215.5" stroke="#19c6ff" stroke-width="1" fill="none"/>
<rect x="216.0" y="580" width="8.500" height="13" fill="url(#go)"/>
<rect x="223.0" y="581" width="1.500" height="12" fill="#5a2c02" opacity=".55"/>
<path d="M216.5 593V580.5H224.5" stroke="#ff930f" stroke-width="1" fill="none"/>
<rect x="244" y="557" width="8.500" height="36" fill="url(#gb)"/>
<rect x="251" y="558" width="1.500" height="35" fill="#064a66" opacity=".55"/>
<path d="M244.5 593V557.5H252.5" stroke="#19c6ff" stroke-width="1" fill="none"/>
<rect x="253.0" y="571" width="8.500" height="22" fill="url(#go)"/>
<rect x="260.0" y="572" width="1.500" height="21" fill="#5a2c02" opacity=".55"/>
<path d="M253.5 593V571.5H261.5" stroke="#ff930f" stroke-width="1" fill="none"/>
<rect x="282" y="539" width="8.500" height="54" fill="url(#gb)"/>
<rect x="289" y="540" width="1.500" height="53" fill="#064a66" opacity=".55"/>
<path d="M282.5 593V539.5H290.5" stroke="#19c6ff" stroke-width="1" fill="none"/>
<rect x="291.0" y="569" width="8.500" height="24" fill="url(#go)"/>
<rect x="298.0" y="570" width="1.500" height="23" fill="#5a2c02" opacity=".55"/>
<path d="M291.5 593V569.5H299.5" stroke="#ff930f" stroke-width="1" fill="none"/>
<rect x="319" y="521" width="8.500" height="72" fill="url(#gb)"/>
<rect x="326" y="522" width="1.500" height="71" fill="#064a66" opacity=".55"/>
<path d="M319.5 593V521.5H327.5" stroke="#19c6ff" stroke-width="1" fill="none"/>
<rect x="328.0" y="563" width="8.500" height="30" fill="url(#go)"/>
<rect x="335.0" y="564" width="1.500" height="29" fill="#5a2c02" opacity=".55"/>
<path d="M328.5 593V563.5H336.5" stroke="#ff930f" stroke-width="1" fill="none"/>
<rect x="357" y="519" width="8.500" height="74" fill="url(#gb)"/>
<rect x="364" y="520" width="1.500" height="73" fill="#064a66" opacity=".55"/>
<path d="M357.5 593V519.5H365.5" stroke="#19c6ff" stroke-width="1" fill="none"/>
<rect x="366.0" y="563" width="8.500" height="30" fill="url(#go)"/>
<rect x="373.0" y="564" width="1.500" height="29" fill="#5a2c02" opacity=".55"/>
<path d="M366.5 593V563.5H374.5" stroke="#ff930f" stroke-width="1" fill="none"/>
<rect x="394" y="518" width="8.500" height="75" fill="url(#gb)"/>
<rect x="401" y="519" width="1.500" height="74" fill="#064a66" opacity=".55"/>
<path d="M394.5 593V518.5H402.5" stroke="#19c6ff" stroke-width="1" fill="none"/>
<rect x="403.0" y="558" width="8.500" height="35" fill="url(#go)"/>
<rect x="410.0" y="559" width="1.500" height="34" fill="#5a2c02" opacity=".55"/>
<path d="M403.5 593V558.5H411.5" stroke="#ff930f" stroke-width="1" fill="none"/>
<rect x="432" y="517" width="8.500" height="76" fill="url(#gb)"/>
<rect x="439" y="518" width="1.500" height="75" fill="#064a66" opacity=".55"/>
<path d="M432.5 593V517.5H440.5" stroke="#19c6ff" stroke-width="1" fill="none"/>
<rect x="441.0" y="552" width="8.500" height="41" fill="url(#go)"/>
<rect x="448.0" y="553" width="1.500" height="40" fill="#5a2c02" opacity=".55"/>
<path d="M441.5 593V552.5H449.5" stroke="#ff930f" stroke-width="1" fill="none"/>
<rect x="469" y="518" width="8.500" height="75" fill="url(#gb)"/>
<rect x="476" y="519" width="1.500" height="74" fill="#064a66" opacity=".55"/>
<path d="M469.5 593V518.5H477.5" stroke="#19c6ff" stroke-width="1" fill="none"/>
<rect x="478.0" y="546" width="8.500" height="47" fill="url(#go)"/>
<rect x="485.0" y="547" width="1.500" height="46" fill="#5a2c02" opacity=".55"/>
<path d="M478.5 593V546.5H486.5" stroke="#ff930f" stroke-width="1" fill="none"/>
<rect x="507" y="517" width="8.500" height="76" fill="url(#gb)"/>
<rect x="514" y="518" width="1.500" height="75" fill="#064a66" opacity=".55"/>
<path d="M507.5 593V517.5H515.5" stroke="#19c6ff" stroke-width="1" fill="none"/>
<rect x="516.0" y="546" width="8.500" height="47" fill="url(#go)"/>
<rect x="523.0" y="547" width="1.500" height="46" fill="#5a2c02" opacity=".55"/>
<path d="M516.5 593V546.5H524.5" stroke="#ff930f" stroke-width="1" fill="none"/>
<rect x="544" y="517" width="8.500" height="76" fill="url(#gb)"/>
<rect x="551" y="518" width="1.500" height="75" fill="#064a66" opacity=".55"/>
<path d="M544.5 593V517.5H552.5" stroke="#19c6ff" stroke-width="1" fill="none"/>
<rect x="553.0" y="545" width="8.500" height="48" fill="url(#go)"/>
<rect x="560.0" y="546" width="1.500" height="47" fill="#5a2c02" opacity=".55"/>
<path d="M553.5 593V545.5H561.5" stroke="#ff930f" stroke-width="1" fill="none"/>
<rect x="582" y="517" width="8.500" height="76" fill="url(#gb)"/>
<rect x="589" y="518" width="1.500" height="75" fill="#064a66" opacity=".55"/>
<path d="M582.5 593V517.5H590.5" stroke="#19c6ff" stroke-width="1" fill="none"/>
<rect x="591.0" y="543" width="8.500" height="50" fill="url(#go)"/>
<rect x="598.0" y="544" width="1.500" height="49" fill="#5a2c02" opacity=".55"/>
<path d="M591.5 593V543.5H599.5" stroke="#ff930f" stroke-width="1" fill="none"/><rect x="45" y="593" width="569" height="2" fill="#000"/><rect x="612" y="507" width="2" height="88" fill="#000"/><path d="M65.5 595v3M103.5 595v3M140.5 595v3M178.5 595v3M216.5 595v3M253.5 595v3M291.5 595v3M328.5 595v3M366.5 595v3M403.5 595v3M441.5 595v3M478.5 595v3M516.5 595v3M553.5 595v3M591.5 595v3" stroke="#555" stroke-width="1"/></svg>
<div class="yl2" style="top:501.5px">30</div>
<div class="yl2" style="top:515.5px">25</div>
<div class="yl2" style="top:529.5px">20</div>
<div class="yl2" style="top:543.5px">15</div>
<div class="yl2" style="top:557.5px">10</div>
<div class="yl2" style="top:571.5px">5</div><div class="xl2" style="left:35.9px">0.5</div>
<div class="xl2" style="left:73.4px">1</div>
<div class="xl2" style="left:111.0px">2</div>
<div class="xl2" style="left:148.5px">4</div>
<div class="xl2" style="left:186.0px">8</div>
<div class="xl2" style="left:223.6px">16</div>
<div class="xl2" style="left:261.1px">32</div>
<div class="xl2" style="left:298.6px">64</div>
<div class="xl2" style="left:336.1px">128</div>
<div class="xl2" style="left:373.7px">256</div>
<div class="xl2" style="left:411.2px">512</div>
<div class="xl2" style="left:448.7px">1024</div>
<div class="xl2" style="left:486.3px">2048</div>
<div class="xl2" style="left:523.8px">4096</div>
<div class="xl2" style="left:561.3px">8192</div>
<div style="left:648px;top:176px;width:98px;height:26px;border:1px solid #2c8ad2;border-radius:3px;background:linear-gradient(#eef2f5 0,#e4ebef 47%,#cbdce6 53%,#c3d7e3 100%);box-shadow:inset 0 0 0 1px #52c8f2"></div>
<div class="lbl " style="left:622px;width:150px;text-align:center;top:181px;">Start</div>
<div class="lbl " style="left:648px;top:211px;">Drive</div>
<div class="combo" style="left:647px;top:233px;width:100px;height:24px"></div><div class="lbl" style="left:651px;top:237px">F:</div><div class="arr sm" style="left:732px;top:243px"></div>
<div class="lbl " style="left:648px;top:267px;">File length</div>
<div class="spinbox" style="left:647px;top:297px;width:74px;height:24px"></div>
<div class="lbl " style="left:650px;top:300px;letter-spacing:-.9px">1000</div>
<div class="spin" style="left:700px;top:299px;width:19px;height:10px"></div><div class="spin" style="left:700px;top:309px;width:19px;height:10px"></div><svg style="left:700px;top:299px" width="19" height="20" viewBox="0 0 19 20"><path d="M6.0 7.0l3.500-3.800 3.500 3.800z" fill="#4a55c4"/><path d="M6.0 13.5l3.500 3.800 3.500-3.800z" fill="#4a55c4"/></svg>
<div class="lbl " style="left:723px;top:305px;">MB</div>
<div class="lbl " style="left:648px;top:343px;">Data pattern</div>
<div class="combo" style="left:647px;top:367px;width:100px;height:24px"></div><div class="lbl" style="left:651px;top:371px">Zero</div><div class="arr sm" style="left:732px;top:377px"></div>
<div class="lbl " style="left:649px;top:479px;">File length</div>
<div class="combo" style="left:647px;top:505px;width:100px;height:24px"></div><div class="lbl" style="left:651px;top:509px">64 KB</div><div class="arr sm" style="left:732px;top:515px"></div>
<div class="lbl " style="left:649px;top:545px;">Delay</div>
<div class="spinbox" style="left:649px;top:569px;width:72px;height:24px"></div>
<div class="lbl " style="left:652px;top:572px;">0</div>
<div class="spin" style="left:726px;top:568px;width:19px;height:12px"></div><div class="spin" style="left:726px;top:581px;width:19px;height:12px"></div><svg style="left:726px;top:568px" width="19" height="25" viewBox="0 0 19 25"><path d="M6.0 8.0l3.500-3.800 3.500 3.800z" fill="#4a55c4"/><path d="M6.0 17.5l3.500 3.800 3.500-3.800z" fill="#4a55c4"/></svg>
<div class="frame"></div>
</div>
</body></html>
